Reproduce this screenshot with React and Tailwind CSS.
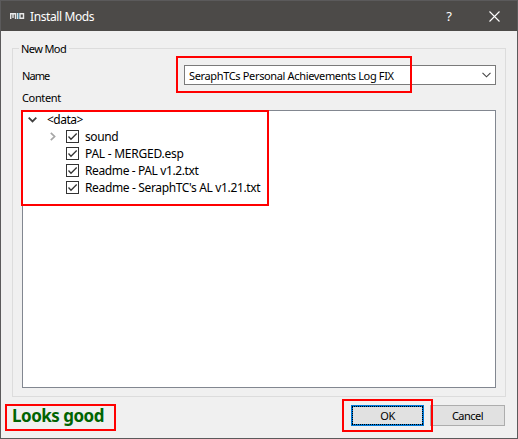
import React from "react";

function CheckBox() {
  return (
    <svg width="13" height="13" viewBox="0 0 13 13" className="block shrink-0">
      <rect x="0.5" y="0.5" width="12" height="12" fill="#fff" stroke="#333" />
      <path d="M2.5 6.5 L5 9.2 L10.7 3.5" fill="none" stroke="#333" strokeWidth="1.3" />
    </svg>
  );
}

function Row({ label, expandable, spacing }) {
  return (
    <div className="flex h-[17px] items-center pl-[26px]">
      <div className="w-[17px] shrink-0">
        {expandable && (
          <svg width="6" height="9" viewBox="0 0 6 9" className="ml-[1px] block">
            <path d="M0.8 0.8 L4.6 4.5 L0.8 8.2" fill="none" stroke="#a6a6a6" strokeWidth="1.7" />
          </svg>
        )}
      </div>
      <CheckBox />
      <span className={"ml-[6px] whitespace-nowrap " + spacing}>{label}</span>
    </div>
  );
}

function Mark({ className }) {
  return <div className={"pointer-events-none absolute border-2 border-[#ff0000] " + className} />;
}

export default function App() {
  return (
    <div className="relative flex h-[439px] w-[518px] flex-col overflow-hidden border border-[#5b5a5b] bg-[#f0f0f0] font-['Noto_Sans','Open_Sans',sans-serif] text-[11px] leading-[17px] tracking-[-0.35px] text-black">
      <header className="flex h-[30px] shrink-0 items-center bg-[#4c4a48] text-[12px] text-white">
        <svg width="15" height="6" viewBox="0 0 15 6" className="-mt-[1px] ml-[9px] block shrink-0">
          <path d="M0.7 6V0.7H5.5V6M3 1V5" fill="none" stroke="#e8e8e8" strokeWidth="1.4" />
          <path d="M7.5 0V6" stroke="#d5e4ea" strokeWidth="1.3" />
          <path d="M8.7 0V6" stroke="#5d9ab5" strokeWidth="1.1" />
          <path d="M10 0.8H13.5V5.2H10Z" fill="none" stroke="#e8e8e8" strokeWidth="1.4" />
        </svg>
        <span className="ml-[5px] mt-[1px] flex-1 whitespace-nowrap tracking-[-0.4px]">Install Mods</span>
        <span className="w-[10px] text-center text-[13px]">?</span>
        <svg width="11" height="11" viewBox="0 0 11 11" className="ml-[35px] mr-[17px] block">
          <path d="M0.5 0.5L10.5 10.5M10.5 0.5L0.5 10.5" stroke="#fff" strokeWidth="1.1" />
        </svg>
      </header>

      <fieldset className="ml-[11px] mt-[9px] h-[357px] w-[494px] shrink-0 border border-[#dcdcdc] pl-[9px]">
        <legend className="-ml-[3px] h-[17px] whitespace-nowrap pl-[2px] pr-[3px] tracking-[-0.6px]">New Mod</legend>
        <div className="mt-[8px] flex h-[20px] items-center">
          <span className="w-[162px] shrink-0 tracking-[-0.9px]">Name</span>
          <div className="flex h-[20px] w-[312px] items-center border border-[#7a7a7a] bg-white pl-[4px]">
            <span className="flex-1 whitespace-nowrap">SeraphTCs Personal Achievements Log FIX</span>
            <svg width="9" height="6" viewBox="0 0 9 6" className="mr-[4px] block">
              <path d="M0.5 0.8L4.5 4.8L8.5 0.8" fill="none" stroke="#444" strokeWidth="1.1" />
            </svg>
          </div>
        </div>
        <div className="-mt-px h-[20px] pt-[5px] mb-[6px]">Content</div>
        <div className="h-[278px] w-[474px] border border-[#828790] bg-white text-[12px]">
          <div className="flex h-[17px] items-center pl-[5px]">
            <svg width="9" height="6" viewBox="0 0 9 6" className="block">
              <path d="M0.7 0.7L4.5 4.5L8.3 0.7" fill="none" stroke="#404040" strokeWidth="1.8" />
            </svg>
            <span className="ml-[10px] tracking-[-0.5px]">&lt;data&gt;</span>
          </div>
          <Row label="sound" expandable spacing="tracking-[-0.4px]" />
          <Row label="PAL - MERGED.esp" spacing="tracking-[-0.25px]" />
          <Row label="Readme - PAL v1.2.txt" spacing="tracking-[-0.38px]" />
          <Row label="Readme - SeraphTC's AL v1.21.txt" spacing="tracking-[-0.35px]" />
        </div>
      </fieldset>

      <footer className="mt-[8px] flex h-[21px] shrink-0 items-center pl-[11px]">
        <span className="w-[339px] text-[17px] font-bold tracking-[-0.5px] text-[#006400]">Looks good</span>
        <button className="relative flex h-[21px] w-[73px] items-center justify-center border-2 border-[#0078d7] bg-[#e1e1e1] tracking-[-0.5px]">
          OK
          <svg width="73" height="21" viewBox="0 0 73 21" className="pointer-events-none absolute -left-[2px] -top-[2px]">
            <path d="M1 1.5H72M1 19.5H72M1.5 2V19M71.5 2V19" fill="none" stroke="#000" strokeDasharray="1 1" shapeRendering="crispEdges" />
          </svg>
        </button>
        <button className="ml-[6px] flex h-[21px] w-[75px] items-center justify-center border border-[#adadad] bg-[#e1e1e1] tracking-[-0.5px]">Cancel</button>
      </footer>

      <Mark className="left-[175px] top-[55px] h-[37px] w-[236px]" />
      <Mark className="left-[20px] top-[109px] h-[96px] w-[248px]" />
      <Mark className="left-[4px] top-[403px] h-[27px] w-[111px]" />
      <Mark className="left-[341px] top-[398px] h-[33px] w-[91px]" />
    </div>
  );
}
